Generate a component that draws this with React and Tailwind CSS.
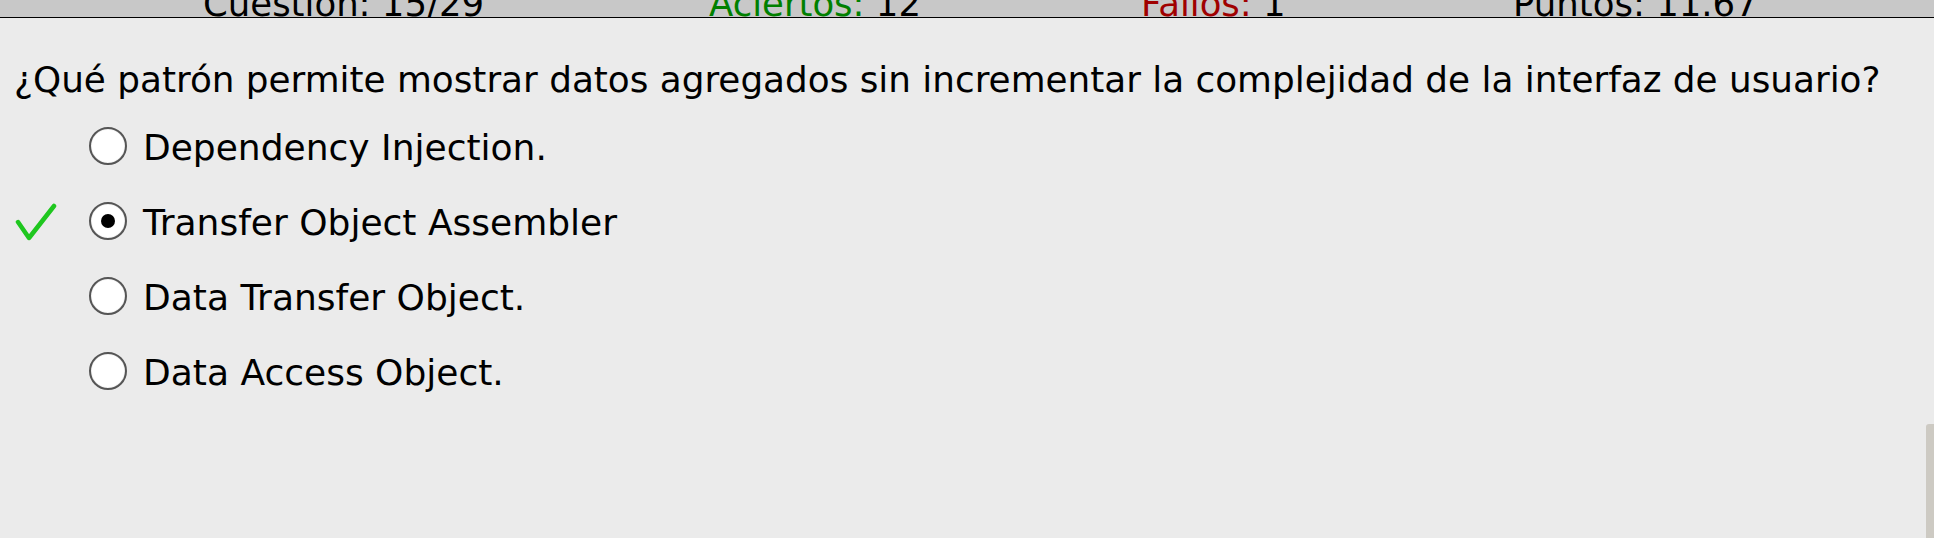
import React from 'react';

const options = [
    { label: 'Dependency Injection.', selected: false, correct: false },
    { label: 'Transfer Object Assembler', selected: true, correct: true },
    { label: 'Data Transfer Object.', selected: false, correct: false },
    { label: 'Data Access Object.', selected: false, correct: false },
];

function CheckMark() {
    return (
        <svg width="44" height="40" viewBox="0 0 44 40" fill="none">
            <path d="M4 19 L15 35 L40 3" stroke="#1fc71f" strokeWidth="4.5" strokeLinecap="round" strokeLinejoin="round" />
        </svg>
    );
}

function Radio({ checked }) {
    return (
        <div className="w-[38px] h-[38px] mb-[4px] rounded-full bg-white border-2 border-[#555555] shadow-[inset_0_0_1px_rgba(0,0,0,0.4)] flex items-center justify-center shrink-0">
            {checked && <div className="w-[14px] h-[14px] rounded-full bg-black" />}
        </div>
    );
}

export default function App() {
    return (
        <div
            className="relative w-[1934px] h-[538px] bg-[#ebebeb] overflow-hidden text-black"
            style={{ fontFamily: '"DejaVu Sans", Verdana, sans-serif' }}
        >
            <div className="h-[18px] bg-[#c8c8c8] border-b border-black overflow-hidden">
                <div className="grid grid-cols-[506px_432px_372px_auto] pl-[203px] mt-[-14px] text-[35.5px] leading-none whitespace-nowrap">
                    <div>Cuestión: 15/29</div>
                    <div>
                        <span className="text-[#008000]">Aciertos:</span> 12
                    </div>
                    <div>
                        <span className="text-[#a00000]">Fallos:</span> 1
                    </div>
                    <div>Puntos: 11.67</div>
                </div>
            </div>

            <div className="pl-[14px] pt-[44px]">
                <p className="text-[35.8px] leading-[36px] whitespace-nowrap">
                    ¿Qué patrón permite mostrar datos agregados sin incrementar la complejidad de la interfaz de usuario?
                </p>
                <ul className="mt-[12px]">
                    {options.map((opt) => (
                        <li key={opt.label} className="flex items-center h-[75px] text-[36px] leading-[75px]">
                            <div className="w-[75px] flex items-center">
                                {opt.correct && <CheckMark />}
                            </div>
                            <Radio checked={opt.selected} />
                            <span className="ml-[16px] whitespace-nowrap">{opt.label}</span>
                        </li>
                    ))}
                </ul>
            </div>

            <div className="absolute right-0 bottom-0 top-[424px] w-[8px] bg-[#cdcac3] rounded-tl-[3px]" />
        </div>
    );
}
